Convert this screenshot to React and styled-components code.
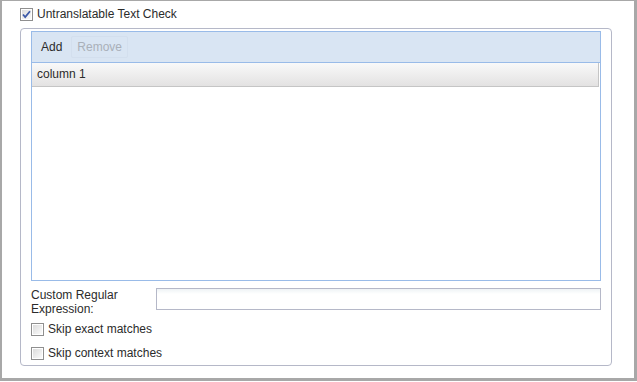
import React from "react";
import styled, { createGlobalStyle } from "styled-components";

const Global = createGlobalStyle`
  html, body { margin: 0; padding: 0; background: #fff; }
  body { font-family: "Liberation Sans", Arial, sans-serif; font-size: 12px; color: #2b2b2b; }
`;

const Frame = styled.div`
  box-sizing: border-box;
  width: 637px;
  height: 381px;
  border-style: solid;
  border-color: #a8a8a8;
  border-width: 1px 3px 3px 2px;
  background: #fff;
  padding: 6px 23px 0 18px;
`;

const CheckRow = styled.label`
  display: flex;
  align-items: center;
  gap: 4px;
  height: 14px;
  line-height: 14px;
  color: #2b2b2b;
  margin-bottom: ${(p) => p.$mb || 0}px;
`;

const BoxWrap = styled.span`
  display: inline-flex;
  width: 13px;
  height: 13px;
  flex: none;
`;

const Fieldset = styled.div`
  box-sizing: border-box;
  margin-top: 7px;
  width: 592px;
  height: 338px;
  border: 1px solid #b5b8c8;
  border-radius: 4px;
  padding: 2px 10px 0 10px;
`;

const Grid = styled.div`
  box-sizing: border-box;
  width: 570px;
  height: 250px;
  border: 1px solid #99bbe8;
  background: #fff;
`;

const Toolbar = styled.div`
  box-sizing: border-box;
  height: 31px;
  background: #d9e5f3;
  border-bottom: 1px solid #99bbe8;
  display: flex;
  align-items: center;
  padding: 0 0 0 3px;
  gap: 3px;
`;

const ToolButton = styled.span`
  box-sizing: border-box;
  height: 22px;
  line-height: 20px;
  padding: 0 5px;
  border: 1px solid ${(p) => (p.$disabled ? "#d3dfee" : "transparent")};
  border-radius: 2px;
  color: ${(p) => (p.$disabled ? "#a9b0b9" : "#2b2b2b")};
`;

const Header = styled.div`
  box-sizing: border-box;
  height: 24px;
  margin-right: 1px;
  background: linear-gradient(#f9f9f9, #e3e2e2);
  border-bottom: 1px solid #c5c5c5;
  border-right: 1px solid #c5c5c5;
  line-height: 22px;
  padding-left: 5px;
  color: #2b2b2b;
`;

const FieldRow = styled.div`
  display: flex;
  align-items: flex-start;
  margin-top: 7px;
  margin-bottom: 6px;
`;

const Label = styled.div`
  width: 125px;
  line-height: 14px;
  color: #2b2b2b;
`;

const TextInput = styled.div`
  box-sizing: border-box;
  width: 445px;
  height: 22px;
  border: 1px solid #b5b8c8;
  background: linear-gradient(#eef3f5 0px, #ffffff 5px, #ffffff);
`;

function Check({ checked }) {
  const id = checked ? "cbg1" : "cbg0";
  return (
    <BoxWrap>
      <svg width="13" height="13" viewBox="0 0 13 13">
        <defs>
          <linearGradient id={id} x1="0" y1="0" x2="1" y2="1">
            <stop offset="0" stopColor="#dcdcdc" />
            <stop offset="1" stopColor="#fbfbfb" />
          </linearGradient>
        </defs>
        <rect x="0.5" y="0.5" width="12" height="12" fill="#fff" stroke="#8f8f8f" />
        <rect x="2" y="2" width="9" height="9" fill={`url(#${id})`} />
        {checked && (
          <path d="M3 6.5 L5.2 9 L10 3.2" fill="none" stroke="#3d5aa8" strokeWidth="1.8" />
        )}
      </svg>
    </BoxWrap>
  );
}

export default function App() {
  return (
    <>
      <Global />
      <Frame>
        <CheckRow>
          <Check checked />
          <span>Untranslatable Text Check</span>
        </CheckRow>
        <Fieldset>
          <Grid>
            <Toolbar>
              <ToolButton>Add</ToolButton>
              <ToolButton $disabled>Remove</ToolButton>
            </Toolbar>
            <Header>column 1</Header>
          </Grid>
          <FieldRow>
            <Label>
              Custom Regular
              <br />
              Expression:
            </Label>
            <TextInput />
          </FieldRow>
          <CheckRow $mb={10}>
            <Check />
            <span>Skip exact matches</span>
          </CheckRow>
          <CheckRow>
            <Check />
            <span>Skip context matches</span>
          </CheckRow>
        </Fieldset>
      </Frame>
    </>
  );
}
